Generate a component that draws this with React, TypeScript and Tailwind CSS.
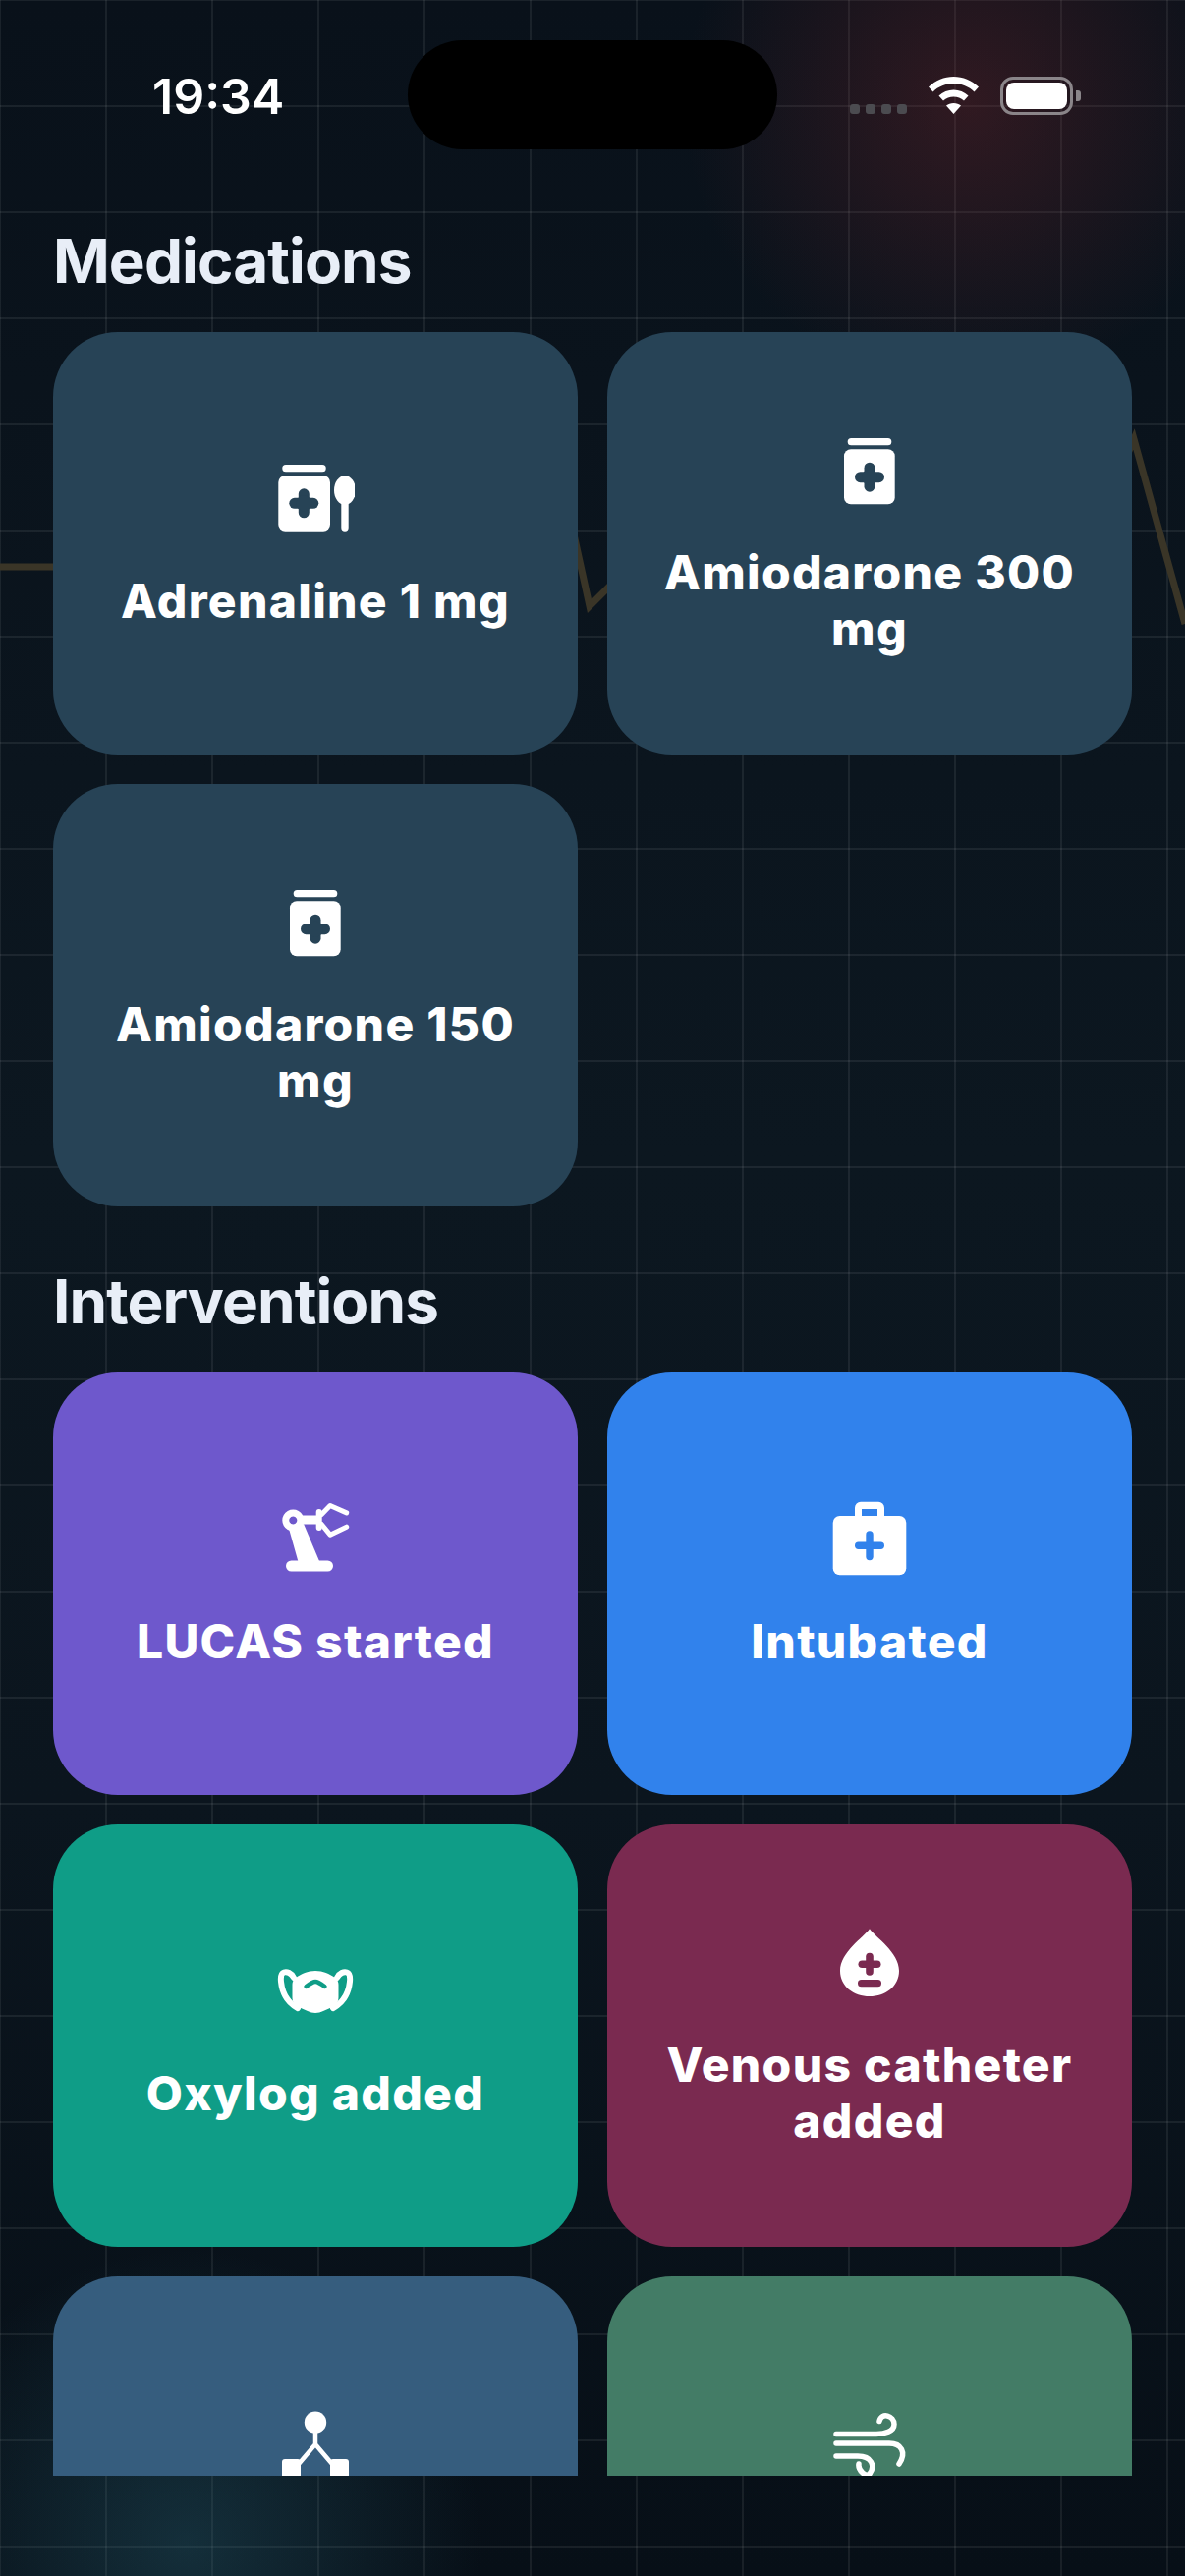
import type { ReactNode } from "react";

type IconProps = { hole: string };

function Cross({ x, y, hole }: { x: number; y: number; hole: string }) {
  return (
    <g fill={hole}>
      <rect x={x - 15} y={y - 5.5} width="30" height="11" rx="5.5" />
      <rect x={x - 5.5} y={y - 15} width="11" height="30" rx="5.5" />
      <circle cx={x} cy={y} r="8" />
    </g>
  );
}

function JarSpoonIcon({ hole }: IconProps) {
  return (
    <svg viewBox="0 0 80 80" className="w-20 h-20" fill="white">
      <rect x="6.3" y="6" width="44.4" height="7.3" rx="3.6" />
      <rect x="2.3" y="17" width="52.7" height="56.7" rx="7" />
      <Cross x={28.3} y={45.3} hole={hole} />
      <ellipse cx="70" cy="32" rx="11" ry="14.7" />
      <rect x="66.3" y="40" width="7.4" height="33.7" rx="3.7" />
    </svg>
  );
}

function JarIcon({ hole }: IconProps) {
  return (
    <svg viewBox="0 0 80 80" className="w-20 h-20" fill="white">
      <rect x="17.7" y="8" width="44.6" height="7.3" rx="3.6" />
      <rect x="14" y="19.3" width="51.7" height="56" rx="7" />
      <Cross x={40} y={47.7} hole={hole} />
    </svg>
  );
}

function RobotArmIcon() {
  return (
    <svg viewBox="0 0 80 80" className="w-20 h-20" fill="white">
      <rect x="10" y="62.5" width="48" height="11" rx="5.5" />
      <path d="M13 30 L28 25 L44 63 H22.3 Z" />
      <path
        fillRule="evenodd"
        d="M17.3 10.5 a11 11 0 1 0 0.01 0 Z M17.3 17.5 a4 4 0 1 1 -0.01 0 Z"
      />
      <rect x="27" y="16.500" width="16" height="9" />
      <rect x="40.7" y="10" width="6" height="22" rx="3" />
      <path
        d="M46.3 15.5 L55 6.5 L71.7 13.9 M46.3 25.5 L55 36.2 L71.7 28.2"
        fill="none"
        stroke="white"
        strokeWidth="5"
        strokeLinecap="round"
        strokeLinejoin="round"
      />
    </svg>
  );
}

function BriefcaseIcon({ hole }: IconProps) {
  return (
    <svg viewBox="0 0 80 80" className="w-20 h-20" fill="white">
      <path
        fillRule="evenodd"
        d="M31 2.7 H49 a6 6 0 0 1 6 6 V17 H48 V10 H32 V17 H25 V8.7 a6 6 0 0 1 6 -6 Z"
      />
      <rect x="2.7" y="17" width="74.6" height="60.3" rx="7" />
      <g fill={hole}>
        <rect x="25" y="43.6" width="30" height="7.4" rx="3.7" />
        <rect x="36.3" y="32.3" width="7.4" height="30" rx="3.7" />
      </g>
    </svg>
  );
}

function MaskIcon({ hole }: IconProps) {
  return (
    <svg viewBox="0 0 80 80" className="w-20 h-20" fill="white">
      <path d="M40 20 C32 20 26 23 20 27 C17.500 29 16.500 31 16.500 34 V47 C16.500 52 19 55 24 57.500 L32 61 C37 63.500 43 63.500 48 61 L56 57.500 C61 55 63.500 52 63.500 47 V34 C63.500 31 62.500 29 60 27 C54 23 48 20 40 20 Z" />
      <path
        d="M18 27 C15.500 22 11 20.500 8 21.500 C5 22.500 4.500 26 5 31 C6 41 11 52 22 58 M62 27 C64.500 22 69 20.500 72 21.500 C75 22.500 75.500 26 75 31 C74 41 69 52 58 58"
        fill="none"
        stroke="white"
        strokeWidth="6"
        strokeLinecap="round"
      />
      <path
        d="M30.5 36 C36 32 38 31 40 31 C42 31 44 32 49.5 36"
        fill="none"
        stroke={hole}
        strokeWidth="4.4"
        strokeLinecap="round"
      />
    </svg>
  );
}

function DropIcon({ hole }: IconProps) {
  return (
    <svg viewBox="0 0 80 80" className="w-20 h-20" fill="white">
      <path d="M40 6.3 C46 15 70 30 70 49 C70 65 56 75 40 75 C24 75 10 65 10 49 C10 30 34 15 40 6.3 Z" />
      <g fill={hole}>
        <rect x="28.5" y="38.5" width="23" height="7.6" rx="3.8" />
        <rect x="36.2" y="30.8" width="7.6" height="23" rx="3.8" />
        <rect x="28" y="58" width="24" height="7.3" rx="3.6" />
      </g>
    </svg>
  );
}

function NetworkIcon() {
  return (
    <svg viewBox="0 0 80 80" className="w-20 h-20" fill="white">
      <circle cx="40" cy="19.7" r="11.2" />
      <path
        d="M40 25 V42 L23 62 M40 42 L57 62"
        fill="none"
        stroke="white"
        strokeWidth="4.5"
      />
      <rect x="6" y="57" width="19" height="19" rx="3" />
      <rect x="55" y="57" width="19" height="19" rx="3" />
    </svg>
  );
}

function WindIcon() {
  return (
    <svg
      viewBox="0 0 80 80"
      className="w-20 h-20"
      fill="none"
      stroke="white"
      strokeWidth="5.5"
      strokeLinecap="round"
    >
      <path d="M6 31.5 H47 C55 31.5 65 29 65 21.500 C65 13 52 8.500 50 18.500" />
      <path d="M6 41 H60 C72 41 78 50 70 62" />
      <path d="M6 54 H28 C42 54 46 64 40 72 C36 76 28 68 29 62" />
    </svg>
  );
}

function ActionCard({
  label,
  color,
  icon,
}: {
  label?: string;
  color: string;
  icon: ReactNode;
}) {
  return (
    <div
      className={`h-[430px] rounded-[66px] flex flex-col items-center justify-center gap-[36px] px-[36px] text-center ${color}`}
    >
      {icon}
      {label ? (
        <span className="text-[48px] leading-[57px] font-extrabold tracking-[1.3px] text-white">
          {label}
        </span>
      ) : (
        <span className="h-[57px]" />
      )}
    </div>
  );
}

function StatusBar() {
  return (
    <div className="relative h-[228px] flex items-start shrink-0">
      <span className="mt-[68px] ml-[155px] text-[50px] leading-[60px] font-semibold text-white">
        19:34
      </span>
      <div className="absolute left-[415px] top-[41px] w-[376px] h-[111px] rounded-full bg-black" />
      <div className="ml-auto mr-[114px] mt-[78px] flex items-start">
        <div className="mt-[28px] mr-[22px] flex gap-[6px]">
          <span className="w-[10px] h-[10px] rounded-[3px] bg-[#4b4b50]" />
          <span className="w-[10px] h-[10px] rounded-[3px] bg-[#4b4b50]" />
          <span className="w-[10px] h-[10px] rounded-[3px] bg-[#4b4b50]" />
          <span className="w-[10px] h-[10px] rounded-[3px] bg-[#4b4b50]" />
        </div>
        <svg viewBox="0 0 51 38" className="w-[51px] h-[38px] mr-[22px]" fill="white">
          <path d="M25.500 0 C35 0 44 4 51 10.500 L46.500 15.500 C41 10 33.500 7 25.500 7 C17.500 7 10 10 4.500 15.500 L0 10.500 C7 4 16 0 25.500 0 Z" />
          <path d="M25.500 13.500 C31 13.500 36.500 15.500 40.500 19.500 L36 24.500 C33 22 29.500 20.500 25.500 20.500 C21.500 20.500 18 22 15 24.500 L10.500 19.500 C14.500 15.500 20 13.500 25.500 13.500 Z" />
          <path d="M25.500 27 C28.500 27 31 28 33 29.500 L25.500 38 L18 29.500 C20 28 22.500 27 25.500 27 Z" />
        </svg>
        <div className="relative w-[74px] h-[39px] rounded-[13px] border-[3px] border-[#8a8589] p-[3px]">
          <div className="w-full h-full rounded-[8px] bg-white" />
          <span className="absolute -right-[11px] top-[11px] w-[5px] h-[11px] rounded-r-[3px] bg-[#8a8589]" />
        </div>
      </div>
    </div>
  );
}

function SectionTitle({ children }: { children: ReactNode }) {
  return (
    <h2 className="h-[76px] mb-[34px] text-[62px] leading-[76px] font-bold tracking-[-0.9px] text-[#e8eef7]">
      {children}
    </h2>
  );
}

export default function App() {
  return (
    <div
      className="relative w-[1206px] h-[2622px] overflow-hidden bg-[linear-gradient(180deg,#09111a_0%,#0c1720_45%,#0b151e_70%,#070f17_100%)]"
      style={{ fontFamily: "Inter, 'Noto Sans', sans-serif" }}
    >
      {/* backdrop: grid, glows and ecg trace */}
      <div className="absolute inset-0 bg-[linear-gradient(to_right,rgba(255,255,255,0.07)_2px,transparent_2px),linear-gradient(to_bottom,rgba(255,255,255,0.07)_2px,transparent_2px)] bg-[size:108px_108px] bg-[position:107px_107px]" />
      <div className="absolute inset-0 bg-[radial-gradient(circle_290px_at_985px_105px,rgba(150,45,50,0.28),transparent),radial-gradient(circle_300px_at_190px_2590px,rgba(50,120,140,0.3),transparent)]" />
      <svg
        className="absolute left-0 top-0"
        width="1206"
        height="700"
        viewBox="0 0 1206 700"
        fill="none"
      >
        <path
          d="M0 577 H540 L570 480 L600 617 L640 577 H1100 L1154 447 L1206 635"
          stroke="#3a3527"
          strokeWidth="7"
        />
      </svg>

      <div className="relative h-full flex flex-col">
        <StatusBar />
        <div className="h-[2292px] overflow-hidden px-[54px]">
          <SectionTitle>Medications</SectionTitle>
          <div className="grid grid-cols-2 gap-[30px]">
            <ActionCard
              label="Adrenaline 1 mg"
              color="bg-[#274356]"
              icon={<JarSpoonIcon hole="#274356" />}
            />
            <ActionCard
              label="Amiodarone 300 mg"
              color="bg-[#274356]"
              icon={<JarIcon hole="#274356" />}
            />
            <ActionCard
              label="Amiodarone 150 mg"
              color="bg-[#274356]"
              icon={<JarIcon hole="#274356" />}
            />
          </div>
          <div className="mt-[59px]">
            <SectionTitle>Interventions</SectionTitle>
          </div>
          <div className="grid grid-cols-2 gap-[30px]">
            <ActionCard
              label="LUCAS started"
              color="bg-[#6e58cc]"
              icon={<RobotArmIcon />}
            />
            <ActionCard
              label="Intubated"
              color="bg-[#3182ec]"
              icon={<BriefcaseIcon hole="#3182ec" />}
            />
            <ActionCard
              label="Oxylog added"
              color="bg-[#0f9d87]"
              icon={<MaskIcon hole="#0f9d87" />}
            />
            <ActionCard
              label="Venous catheter added"
              color="bg-[#7a2a50]"
              icon={<DropIcon hole="#7a2a50" />}
            />
            <ActionCard color="bg-[#365d7e]" icon={<NetworkIcon />} />
            <ActionCard color="bg-[#437c66]" icon={<WindIcon />} />
          </div>
        </div>
      </div>
    </div>
  );
}
